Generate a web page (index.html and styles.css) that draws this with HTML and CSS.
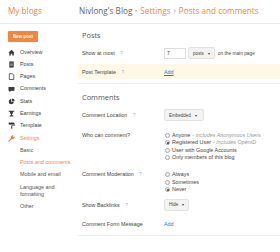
FILE: index.html
```html
<!DOCTYPE html>
<html lang="en">
<head>
    <meta charset="UTF-8">
    <title>Settings - Posts and comments</title>
    <link rel="stylesheet" href="styles.css">
</head>
<body>
    <header class="topbar">
        <div class="brand">My blogs</div>
        <div class="crumbs">
            <span class="blog-name">Nivlong's Blog</span>
            <span class="caret">&#9662;</span>
            <span class="crumb">Settings</span>
            <span class="sep">&rsaquo;</span>
            <span class="crumb">Posts and comments</span>
        </div>
    </header>

    <div class="layout">
        <nav class="sidebar">
            <button class="new-post">New post</button>
            <ul class="nav">
                <li>
                    <svg viewBox="0 0 8 8"><path d="M0.5 4.2 L4 0.8 L7.5 4.2 L6.6 4.2 L6.6 7.5 L4.8 7.5 L4.8 5.4 L3.2 5.4 L3.2 7.5 L1.4 7.5 L1.4 4.2 Z" fill="#3a3a3a"/></svg>
                    Overview
                </li>
                <li>
                    <svg viewBox="0 0 8 8"><rect x="1.5" y="0.5" width="5" height="7" fill="#3a3a3a"/><rect x="2.5" y="2" width="3" height="0.7" fill="#bbb"/><rect x="2.5" y="3.5" width="3" height="0.7" fill="#bbb"/><rect x="2.5" y="5" width="3" height="0.7" fill="#bbb"/></svg>
                    Posts
                </li>
                <li>
                    <svg viewBox="0 0 8 8"><path d="M1.5 0.8 H5 L6.6 2.4 V7.4 H1.5 Z" fill="none" stroke="#3a3a3a" stroke-width="0.9"/></svg>
                    Pages
                </li>
                <li>
                    <svg viewBox="0 0 8 8"><path d="M0.6 1 H7.4 V5.4 H3.4 L1.6 7.2 V5.4 H0.6 Z" fill="#3a3a3a"/></svg>
                    Comments
                </li>
                <li>
                    <svg viewBox="0 0 8 8"><path d="M3.6 1.2 A3 3 0 1 0 6.8 4.4 L3.6 4.4 Z" fill="#3a3a3a"/><path d="M4.4 0.5 A3 3 0 0 1 7.5 3.6 L4.4 3.6 Z" fill="#3a3a3a"/></svg>
                    Stats
                </li>
                <li>
                    <svg viewBox="0 0 8 8"><path d="M0.8 0.8 H7.2 V2 H5.6 V4.2 H4.6 V6 H6 V7.4 H2 V6 H3.4 V4.2 H2.4 V2 H0.8 Z" fill="#3a3a3a"/></svg>
                    Earnings
                </li>
                <li>
                    <svg viewBox="0 0 8 8"><rect x="0.8" y="0.6" width="6.2" height="2.4" fill="#3a3a3a"/><path d="M7 1.8 H7.6 V4 H4.2 V5" fill="none" stroke="#3a3a3a" stroke-width="0.7"/><rect x="3.6" y="4.8" width="1.3" height="2.8" fill="#3a3a3a"/></svg>
                    Template
                </li>
                <li class="active">
                    <svg viewBox="0 0 8 8"><path d="M1 7 L4.6 3.4" stroke="#f57d2e" stroke-width="1.4" stroke-linecap="round"/><path d="M4 3.8 A2 2 0 0 1 6.6 0.8 L5.4 2 L6 2.6 L7.2 1.4 A2 2 0 0 1 4.2 4 Z" fill="#f57d2e"/></svg>
                    Settings
                </li>
                <li class="sub">Basic</li>
                <li class="sub active">Posts and comments</li>
                <li class="sub">Mobile and email</li>
                <li class="sub">Language and<br>formatting</li>
                <li class="sub">Other</li>
            </ul>
        </nav>

        <main class="content">
            <section class="group">
                <h2>Posts</h2>
                <div class="row">
                    <div class="label">Show at most <span class="help">?</span></div>
                    <div class="control">
                        <span class="input">7</span>
                        <span class="select">posts <i>&#9662;</i></span>
                        <span class="note">on the main page</span>
                    </div>
                </div>
                <div class="row highlight">
                    <div class="label">Post Template <span class="help">?</span></div>
                    <div class="control"><a class="link underline">Add</a></div>
                </div>
            </section>

            <section class="group">
                <h2 class="second">Comments</h2>
                <div class="row location">
                    <div class="label">Comment Location <span class="help">?</span></div>
                    <div class="control"><span class="select wide">Embedded <i>&#9662;</i></span></div>
                </div>
                <div class="row options who">
                    <div class="label">Who can comment?</div>
                    <ul class="radios">
                        <li><span class="radio"></span>Anyone <em>- includes Anonymous Users</em></li>
                        <li><span class="radio on"></span>Registered User <em>- includes OpenID</em></li>
                        <li><span class="radio"></span>User with Google Accounts</li>
                        <li><span class="radio"></span>Only members of this blog</li>
                    </ul>
                </div>
                <div class="row options moderation">
                    <div class="label">Comment Moderation <span class="help">?</span></div>
                    <ul class="radios">
                        <li><span class="radio"></span>Always</li>
                        <li><span class="radio"></span>Sometimes</li>
                        <li><span class="radio on"></span>Never</li>
                    </ul>
                </div>
                <div class="row backlinks">
                    <div class="label">Show Backlinks <span class="help">?</span></div>
                    <div class="control"><span class="select">Hide <i>&#9662;</i></span></div>
                </div>
                <div class="row message">
                    <div class="label">Comment Form Message</div>
                    <div class="control"><a class="link">Add</a></div>
                </div>
            </section>
        </main>
    </div>
</body>
</html>
```

FILE: styles.css
```css
:root {
    --orange: #f5853a;
    --text: #444444;
    --muted: #999999;
    --border: #e6e6e6;
    --link: #3b6fd0;
}

body {
    margin: 0;
    width: 280px;
    height: 252px;
    overflow: hidden;
    background: #ffffff;
    font-family: "Liberation Sans", Arial, sans-serif;
    color: var(--text);
}

.topbar {
    display: flex;
    align-items: center;
    height: 24px;
    border-bottom: 1px solid #ececec;
    font-family: "Open Sans", sans-serif;
    font-size: 8.2px;
    padding-bottom: 3px;
    box-sizing: border-box;
}

.brand {
    width: 79px;
    padding-left: 8px;
    box-sizing: border-box;
    color: var(--orange);
}

.crumbs {
    display: flex;
    align-items: center;
}

.blog-name {
    color: #666666;
}

.caret {
    font-size: 4px;
    color: #aaaaaa;
    margin: 0 3px 0 3px;
}

.crumb {
    color: var(--orange);
}

.sep {
    color: #888888;
    margin: 0 3px;
    font-size: 7px;
}

.layout {
    display: flex;
}

.sidebar {
    width: 78px;
    flex-shrink: 0;
    padding: 7px 0 0 8px;
    box-sizing: border-box;
}

.new-post {
    display: block;
    width: 30px;
    height: 11px;
    padding: 0;
    border: none;
    border-radius: 1px;
    background: var(--orange);
    color: #ffffff;
    font-family: "Liberation Sans", Arial, sans-serif;
    font-size: 4.5px;
    font-weight: bold;
}

.nav {
    list-style: none;
    margin: 4px 0 0;
    padding: 0;
    font-size: 5.4px;
    color: #444444;
}

.nav li {
    display: flex;
    align-items: center;
    line-height: 7.3px;
    padding: 2.5px 0;
}

.nav li svg {
    width: 7px;
    height: 7px;
    margin-right: 5px;
}

.nav li.sub {
    padding-left: 12px;
    display: block;
    color: #555555;
}

.nav li.active {
    color: var(--orange);
}

.content {
    flex: 1;
    font-size: 5.4px;
}

.group {
    border-bottom: 1px solid #eeeeee;
    padding-bottom: 4px;
}

h2 {
    margin: 6px 0 6px 4px;
    font-family: "Open Sans", sans-serif;
    font-size: 7.4px;
    font-weight: normal;
    line-height: 10px;
    color: #555555;
}

h2.second {
    margin-top: 8px;
}

.row {
    display: flex;
    align-items: center;
    min-height: 14px;
    padding-left: 4px;
}

.row + .row {
    margin-top: 4px;
}

.label {
    width: 82px;
    flex-shrink: 0;
    color: #444444;
}

.help {
    color: #8fb1e6;
    margin-left: 4px;
    font-size: 4.5px;
}

.control {
    display: flex;
    align-items: center;
}

.highlight {
    min-height: 15px;
    background: #fff8e6;
}

.input {
    width: 22px;
    height: 11px;
    border: 1px solid #dddddd;
    box-sizing: border-box;
    padding-left: 2px;
    font-size: 5px;
    line-height: 9px;
    color: #333333;
}

.select {
    display: inline-flex;
    align-items: center;
    height: 12px;
    padding: 0 4px;
    margin-left: 2px;
    background: #f3f3f3;
    border: 1px solid #e2e2e2;
    border-radius: 2px;
    box-sizing: border-box;
    font-size: 4.5px;
    color: #444444;
}

.select i {
    font-style: normal;
    font-size: 4px;
    margin-left: 4px;
}

.control > .select:first-child {
    margin-left: 0;
}

.select.wide {
    width: 40px;
}

.note {
    margin-left: 3px;
    font-size: 4.8px;
    color: #444444;
}

.link {
    color: var(--link);
}

.link.underline {
    text-decoration: underline;
}

.location {
    margin-top: 6px;
}

.options {
    align-items: flex-start;
}

.row.who {
    margin-top: 10px;
}

.row.moderation {
    margin-top: 10px;
}

.radios {
    list-style: none;
    margin: 0;
    padding: 0 0 0 1px;
    line-height: 7.3px;
    color: #444444;
}

.moderation .radios {
    line-height: 7.5px;
}

.radios li {
    display: flex;
    align-items: center;
}

.radios em {
    color: var(--muted);
    margin-left: 2px;
}

.radio {
    width: 5px;
    height: 5px;
    border: 0.7px solid #aaaaaa;
    border-radius: 50%;
    background: #f2f2f2;
    margin-right: 2px;
    box-sizing: border-box;
    position: relative;
}

.radio.on::after {
    content: "";
    position: absolute;
    left: 0.8px;
    top: 0.8px;
    width: 2px;
    height: 2px;
    border-radius: 50%;
    background: #333333;
}

.backlinks {
    margin-top: 11px;
}

.row.message {
    margin-top: 6px;
    min-height: 12px;
    margin-bottom: 1px;
}
```
